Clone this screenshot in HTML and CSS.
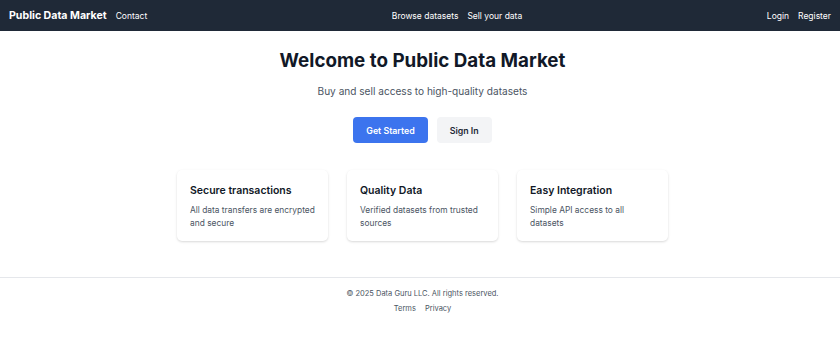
FILE: index.html
```html
<!DOCTYPE html>
<html lang="en">
<head>
<meta charset="utf-8">
<title>Public Data Market</title>
<link rel="stylesheet" href="styles.css">
</head>
<body>
<nav class="nav">
  <div class="nav-group">
    <a class="brand" href="#">Public Data Market</a>
    <a class="nav-link" href="#">Contact</a>
  </div>
  <div class="nav-group">
    <a class="nav-link" href="#">Browse datasets</a>
    <a class="nav-link" href="#">Sell your data</a>
  </div>
  <div class="nav-group">
    <a class="nav-link" href="#">Login</a>
    <a class="nav-link" href="#">Register</a>
  </div>
</nav>
<main class="main">
  <h1 class="title">Welcome to Public Data Market</h1>
  <p class="subtitle">Buy and sell access to high-quality datasets</p>
  <div class="actions">
    <a class="btn btn-primary" href="#">Get Started</a>
    <a class="btn btn-secondary" href="#">Sign In</a>
  </div>
  <div class="cards">
    <div class="card">
      <h3 class="card-title">Secure transactions</h3>
      <p class="card-text">All data transfers are encrypted and secure</p>
    </div>
    <div class="card">
      <h3 class="card-title">Quality Data</h3>
      <p class="card-text">Verified datasets from trusted sources</p>
    </div>
    <div class="card">
      <h3 class="card-title">Easy Integration</h3>
      <p class="card-text">Simple API access to all datasets</p>
    </div>
  </div>
</main>
<footer class="footer">
  <p class="copyright">© 2025 Data Guru LLC. All rights reserved.</p>
  <div class="footer-links">
    <a href="#">Terms</a>
    <a href="#">Privacy</a>
  </div>
</footer>
</body>
</html>
```
FILE: styles.css
```css
* { box-sizing: border-box; }
body {
  margin: 0;
  font-family: Inter, "Noto Sans", sans-serif;
  background: #ffffff;
  color: #111827;
}
a { text-decoration: none; color: inherit; }

.nav {
  height: 31px;
  background: #1f2937;
  display: flex;
  justify-content: space-between;
  align-items: center;
  padding: 0 9px;
}
.nav-group {
  display: flex;
  align-items: center;
  gap: 9px;
}
.brand {
  color: #ffffff;
  font-weight: 700;
  font-size: 10.6px;
}
.nav-link {
  color: #ffffff;
  font-size: 8.5px;
}

.main {
  display: flex;
  flex-direction: column;
  align-items: center;
  padding: 18px 0 0 5px;
}
.title {
  margin: 0;
  font-size: 18.8px;
  line-height: 23px;
  font-weight: 700;
  color: #111827;
}
.subtitle {
  margin: 11px 0 0;
  font-size: 10.1px;
  line-height: 16px;
  color: #4b5563;
}
.actions {
  display: flex;
  gap: 9px;
  margin-top: 18px;
}
.btn {
  height: 26px;
  display: flex;
  align-items: center;
  padding: 0 13px;
  border-radius: 4px;
  font-size: 8.8px;
  font-weight: 600;
}
.btn-primary {
  background: #3c74ee;
  color: #ffffff;
}
.btn-secondary {
  background: #f3f4f6;
  color: #1f2937;
}
.cards {
  display: flex;
  gap: 19px;
  margin-top: 27px;
}
.card {
  width: 151px;
  height: 71px;
  padding: 13px 12px 13px 13px;
  border-radius: 5px;
  background: #ffffff;
  box-shadow: 0 1px 3px rgba(0,0,0,0.1), 0 1px 2px rgba(0,0,0,0.06);
}
.card-title {
  margin: 0 0 5px;
  font-size: 10.5px;
  line-height: 16px;
  font-weight: 600;
  color: #111827;
}
.card-text {
  margin: 0;
  font-size: 8.4px;
  line-height: 13.1px;
  color: #4b5563;
}

.footer {
  margin-top: 36px;
  border-top: 1px solid #e5e7eb;
  padding: 10px 0 0 5px;
  display: flex;
  flex-direction: column;
  align-items: center;
  color: #4b5563;
  font-size: 7.5px;
  line-height: 12px;
}
.copyright { margin: 0; }
.footer-links {
  display: flex;
  gap: 9px;
  margin-top: 3px;
}
```
